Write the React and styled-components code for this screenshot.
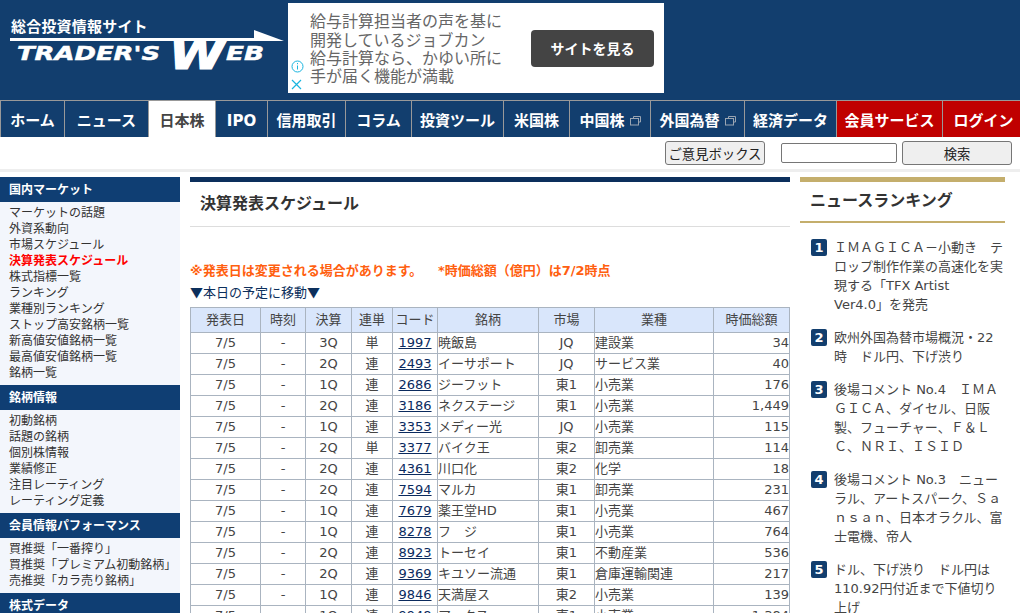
import React from 'react';
import styled, { createGlobalStyle } from 'styled-components';

const navy = '#123e6e';

const navItems = [
    { label: 'ホーム', width: 64 },
    { label: 'ニュース', width: 84 },
    { label: '日本株', width: 67, active: true },
    { label: 'IPO', width: 52 },
    { label: '信用取引', width: 78 },
    { label: 'コラム', width: 66 },
    { label: '投資ツール', width: 92 },
    { label: '米国株', width: 66 },
    { label: '中国株', width: 81, external: true },
    { label: '外国為替', width: 94, external: true },
    { label: '経済データ', width: 92 },
    { label: '会員サービス', width: 106, red: true },
    { label: 'ログイン', width: 82, red: true },
];

const sideMenus = [
    {
        title: '国内マーケット',
        links: ['マーケットの話題', '外資系動向', '市場スケジュール', '決算発表スケジュール', '株式指標一覧', 'ランキング', '業種別ランキング', 'ストップ高安銘柄一覧', '新高値安値銘柄一覧', '最高値安値銘柄一覧', '銘柄一覧'],
    },
    {
        title: '銘柄情報',
        links: ['初動銘柄', '話題の銘柄', '個別株情報', '業績修正', '注目レーティング', 'レーティング定義'],
    },
    {
        title: '会員情報パフォーマンス',
        links: ['買推奨「一番搾り」', '買推奨「プレミアム初動銘柄」', '売推奨「カラ売り銘柄」'],
    },
    { title: '株式データ', links: [] },
];

const columns = [
    { title: '発表日', width: 70 },
    { title: '時刻', width: 45 },
    { title: '決算', width: 46 },
    { title: '連単', width: 41 },
    { title: 'コード', width: 45 },
    { title: '銘柄', width: 101 },
    { title: '市場', width: 56 },
    { title: '業種', width: 119 },
    { title: '時価総額', width: 76 },
];

const rows = [
    ['3Q', '単', '1997', '暁飯島', 'JQ', '建設業', '34'],
    ['2Q', '連', '2493', 'イーサポート', 'JQ', 'サービス業', '40'],
    ['1Q', '連', '2686', 'ジーフット', '東1', '小売業', '176'],
    ['2Q', '連', '3186', 'ネクステージ', '東1', '小売業', '1,449'],
    ['1Q', '連', '3353', 'メディー光', 'JQ', '小売業', '115'],
    ['2Q', '単', '3377', 'バイク王', '東2', '卸売業', '114'],
    ['2Q', '連', '4361', '川口化', '東2', '化学', '18'],
    ['2Q', '連', '7594', 'マルカ', '東1', '卸売業', '231'],
    ['1Q', '連', '7679', '薬王堂HD', '東1', '小売業', '467'],
    ['1Q', '連', '8278', 'フ　ジ', '東1', '小売業', '764'],
    ['2Q', '連', '8923', 'トーセイ', '東1', '不動産業', '536'],
    ['2Q', '連', '9369', 'キユソー流通', '東1', '倉庫運輸関連', '217'],
    ['1Q', '連', '9846', '天満屋ス', '東2', '小売業', '139'],
    ['1Q', '連', '9948', 'アークス', '東1', '小売業', '1,384'],
];

// the newline in the first one is where the reference breaks the line
const ranking = [
    'ＩＭＡＧＩＣＡ－小動き　テロップ制作作業の高速化を実現する「TFX Artist\nVer4.0」を発売',
    '欧州外国為替市場概況・22時　ドル円、下げ渋り',
    '後場コメント No.4　ＩＭＡＧＩＣＡ、ダイセル、日阪製、フューチャー、Ｆ＆ＬＣ、ＮＲＩ、ＩＳＩＤ',
    '後場コメント No.3　ニューラル、アートスパーク、Ｓａｎｓａｎ、日本オラクル、富士電機、帝人',
    'ドル、下げ渋り　ドル円は110.92円付近まで下値切り上げ',
];

const Global = createGlobalStyle`
html, body {
    margin: 0;
    padding: 0;
    background: #fff;
    overflow: hidden;
}
body {
    font-family: "DejaVu Sans", "Noto Sans CJK JP", sans-serif;
    color: #333;
}
`;

const Page = styled.div`
width: 1020px;
height: 613px;
overflow: hidden;
`;

const Header = styled.header`
height: 100px;
background: ${navy};
display: flex;
align-items: flex-start;
`;

const LogoBox = styled.div`
width: 288px;
flex: none;
display: flex;
flex-direction: column;
padding-top: 17px;
`;

const Tagline = styled.div`
color: #fff;
font-size: 15px;
line-height: 20px;
font-weight: 700;
letter-spacing: 0.2px;
padding-left: 11px;
white-space: nowrap;
`;

const LogoMark = styled.svg`
display: block;
overflow: visible;
fill: #fff;
`;

const LogoWord = styled.text`
font-family: "DejaVu Sans", sans-serif;
font-weight: 700;
font-style: italic;
stroke: #fff;
stroke-width: ${p => p.$heavy || 0.5}px;
`;

const Ad = styled.div`
margin-top: 3px;
width: 376px;
height: 90px;
background: #fff;
display: flex;
align-items: center;
`;

const AdMarks = styled.div`
width: 22px;
height: 100%;
flex: none;
display: flex;
flex-direction: column;
justify-content: flex-end;
align-items: flex-start;
gap: 6px;
padding: 0 0 3px 3px;
box-sizing: border-box;
`;

const AdCopy = styled.div`
width: 221px;
flex: none;
color: #666;
font-size: 16px;
line-height: 18.3px;
font-family: "Noto Sans CJK JP", sans-serif;
white-space: nowrap;
`;

const AdButton = styled.div`
width: 123px;
height: 37px;
background: #444;
border-radius: 4px;
color: #fff;
font-size: 14px;
font-weight: 700;
display: flex;
align-items: center;
justify-content: center;
`;

const Nav = styled.nav`
display: flex;
height: 37px;
background: ${navy};
border-top: 1px solid #999;
box-sizing: border-box;
`;

const NavItem = styled.a`
flex: none;
width: ${p => p.$width}px;
box-sizing: border-box;
padding-top: 3px;
border-left: 1px solid #999;
display: flex;
align-items: center;
justify-content: center;
gap: 5px;
font-size: 15px;
line-height: 20px;
font-weight: 700;
white-space: nowrap;
color: ${p => (p.$active ? '#444' : '#fff')};
background: ${p => (p.$active ? '#fff' : p.$red ? '#c00000' : 'transparent')};
`;

const SubBar = styled.div`
height: 32px;
display: flex;
align-items: center;
justify-content: flex-end;
padding-right: 8px;
`;

const Button = styled.button`
box-sizing: border-box;
height: 24px;
width: ${p => p.$width}px;
padding: 0;
font-family: inherit;
font-size: 13.33px;
color: #222;
background: #efefef;
border: 1px solid #767676;
border-radius: 3px;
white-space: nowrap;
`;

const SearchInput = styled.input`
box-sizing: border-box;
width: 116px;
height: 20px;
margin: 0 5px 0 16px;
border: 1px solid #767676;
border-radius: 2px;
background: #fff;
`;

const Rule = styled.div`
height: 3px;
background: #eee;
`;

const Columns = styled.div`
display: flex;
gap: 10px;
margin-top: 5px;
align-items: flex-start;
`;

const Sidebar = styled.aside`
width: 180px;
flex: none;
`;

const SideTitle = styled.h3`
margin: 0;
height: 25px;
padding-left: 9px;
background: #0f3e73;
color: #fff;
font-size: 12px;
line-height: 26px;
font-weight: 700;
`;

const SideList = styled.ul`
margin: 0;
padding: 3px 0 4px 9px;
list-style: none;
background: #f3f6fc;
`;

const SideLink = styled.li`
font-size: 12px;
line-height: 16px;
white-space: nowrap;
color: ${p => (p.$current ? '#f00' : '#333')};
font-weight: ${p => (p.$current ? 700 : 400)};
`;

const Main = styled.main`
width: 600px;
flex: none;
border-top: 5px solid #0c2f5c;
`;

const PageTitle = styled.h1`
margin: 0;
height: 44px;
padding-left: 10px;
border-bottom: 1px solid #ddd;
font-size: 16px;
line-height: 44px;
font-weight: 700;
color: #333;
`;

const Notice = styled.p`
margin: 35px 0 0;
font-size: 13px;
line-height: 18px;
font-weight: 700;
color: #ff6010;
white-space: pre;
`;

const JumpLink = styled.p`
margin: 3px 0 0;
font-family: "Noto Sans CJK JP", sans-serif;
font-size: 13px;
line-height: 18px;
color: #0c2f5c;
`;

const Table = styled.table`
margin-top: 6px;
width: 600px;
border-collapse: collapse;
table-layout: fixed;
font-size: 13px;
`;

const Th = styled.th`
height: 24px;
padding: 0;
background: #d9e6fb;
border: 1px solid #aab4c0;
font-weight: 400;
line-height: 20px;
color: #444;
`;

const Td = styled.td`
height: 20px;
padding: 0;
border: 1px solid #aab4c0;
line-height: 20px;
color: #444;
text-align: ${p => p.$align || 'center'};
white-space: nowrap;
overflow: hidden;
`;

const CodeLink = styled.a`
color: #0a2a5e;
text-decoration: underline;
`;

const Ranking = styled.section`
width: 205px;
flex: none;
border-top: 5px solid #c4ae6c;
`;

const RankTitle = styled.h2`
margin: 0;
height: 39px;
padding-left: 10px;
border-bottom: 2px solid #c4ae6c;
font-size: 16px;
line-height: 38px;
font-weight: 700;
color: #333;
`;

const RankList = styled.ol`
margin: 15px 0 0;
padding: 0 0 0 11px;
list-style: none;
`;

const RankRow = styled.li`
display: flex;
gap: 7px;
margin-bottom: 14px;
`;

const RankBadge = styled.span`
flex: none;
width: 16px;
height: 17px;
margin-top: 1px;
border-radius: 2px;
background: ${navy};
color: #fff;
font-size: 13px;
font-weight: 700;
line-height: 17px;
text-align: center;
`;

const RankText = styled.a`
width: 171px;
font-size: 13px;
line-height: 19px;
color: #444;
white-space: pre-line;
`;

const ExternalIcon = () => (
    <svg width="11" height="10" viewBox="0 0 11 10" fill="none" stroke="#9aa5b2" strokeWidth="1">
        <path d="M3.5 2.5V.5h7v5.5h-2" />
        <rect x="0.5" y="2.5" width="8" height="6.5" />
    </svg>
);

const Logo = () => (
    <LogoMark width="288" height="40" viewBox="0 0 288 40">
        <polygon points="10,1 254,1 254,-7 284,4 10,4" />
        <LogoWord x="17" y="23" fontSize="20" textLength="143" lengthAdjust="spacingAndGlyphs">TRADER'S</LogoWord>
        <LogoWord x="169" y="32" fontSize="40" textLength="56" lengthAdjust="spacingAndGlyphs" $heavy={1.2}>W</LogoWord>
        <LogoWord x="226" y="23" fontSize="20" textLength="38" lengthAdjust="spacingAndGlyphs">EB</LogoWord>
    </LogoMark>
);

const App = () => {
    return (
        <Page>
            <Global />
            <Header>
                <LogoBox>
                    <Tagline>総合投資情報サイト</Tagline>
                    <Logo />
                </LogoBox>
                <Ad>
                    <AdMarks>
                        <svg width="13" height="13" viewBox="0 0 13 13" fill="none" stroke="#19b5e0" strokeWidth="1">
                            <circle cx="6.5" cy="6.5" r="5.5" />
                            <path d="M6.5 5.5v4M6.5 3v1.2" />
                        </svg>
                        <svg width="11" height="11" viewBox="0 0 11 11" fill="none" stroke="#19b5e0" strokeWidth="1.2">
                            <path d="M1 1l9 9M10 1l-9 9" />
                        </svg>
                    </AdMarks>
                    <AdCopy>
                        給与計算担当者の声を基に<br />
                        開発しているジョブカン<br />
                        給与計算なら、かゆい所に<br />
                        手が届く機能が満載
                    </AdCopy>
                    <AdButton>サイトを見る</AdButton>
                </Ad>
            </Header>

            <Nav>
                {navItems.map(item => (
                    <NavItem key={item.label} $width={item.width} $active={item.active} $red={item.red}>
                        {item.label}
                        {item.external && <ExternalIcon />}
                    </NavItem>
                ))}
            </Nav>

            <SubBar>
                <Button $width={100}>ご意見ボックス</Button>
                <SearchInput />
                <Button $width={110}>検索</Button>
            </SubBar>
            <Rule />

            <Columns>
                <Sidebar>
                    {sideMenus.map(menu => (
                        <div key={menu.title}>
                            <SideTitle>{menu.title}</SideTitle>
                            {menu.links.length > 0 && (
                                <SideList>
                                    {menu.links.map(link => (
                                        <SideLink key={link} $current={link === '決算発表スケジュール'}>{link}</SideLink>
                                    ))}
                                </SideList>
                            )}
                        </div>
                    ))}
                </Sidebar>

                <Main>
                    <PageTitle>決算発表スケジュール</PageTitle>
                    <Notice>{'※発表日は変更される場合があります。　  *時価総額（億円）は7/2時点'}</Notice>
                    <JumpLink>▼本日の予定に移動▼</JumpLink>
                    <Table>
                        <colgroup>
                            {columns.map(col => <col key={col.title} width={col.width} />)}
                        </colgroup>
                        <thead>
                            <tr>
                                {columns.map(col => <Th key={col.title}>{col.title}</Th>)}
                            </tr>
                        </thead>
                        <tbody>
                            {rows.map(row => (
                                <tr key={row[2]}>
                                    <Td>7/5</Td>
                                    <Td>-</Td>
                                    <Td>{row[0]}</Td>
                                    <Td>{row[1]}</Td>
                                    <Td><CodeLink>{row[2]}</CodeLink></Td>
                                    <Td $align="left">{row[3]}</Td>
                                    <Td>{row[4]}</Td>
                                    <Td $align="left">{row[5]}</Td>
                                    <Td $align="right">{row[6]}</Td>
                                </tr>
                            ))}
                        </tbody>
                    </Table>
                </Main>

                <Ranking>
                    <RankTitle>ニュースランキング</RankTitle>
                    <RankList>
                        {ranking.map((text, i) => (
                            <RankRow key={text}>
                                <RankBadge>{i + 1}</RankBadge>
                                <RankText>{text}</RankText>
                            </RankRow>
                        ))}
                    </RankList>
                </Ranking>
            </Columns>
        </Page>
    );
};

export default App;
